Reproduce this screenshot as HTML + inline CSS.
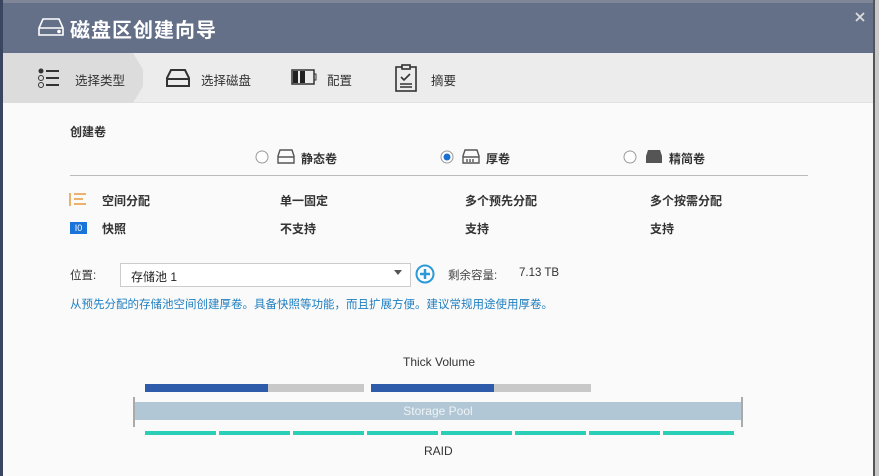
<!DOCTYPE html>
<html><head><meta charset="utf-8"><style>
*{margin:0;padding:0;box-sizing:border-box}
body{width:879px;height:476px;overflow:hidden;background:#fafafa;font-family:"Liberation Sans","Noto Sans CJK SC",sans-serif;position:relative;color:#222}
.hdr{position:absolute;left:0;top:0;width:879px;height:53px;background:#646f88;border-top:3px solid #7e8698}
.hdr .t{position:absolute;left:70px;top:11px;color:#fff;font-size:20px;font-weight:bold;letter-spacing:1px}
.lb{position:absolute;left:0;top:0;width:3px;height:476px;background:#3a4660}
.rb{position:absolute;right:4px;top:0;width:2px;height:476px;background:#555}
.rs{position:absolute;right:0;top:0;width:4px;height:476px;background:#c9c9c9}
.nav{position:absolute;left:3px;top:53px;width:870px;height:50px;background:#ececec;border-bottom:1px solid #e2e2e2}
.act{position:absolute;left:0;top:0;width:140px;height:50px;background:#dcdcdc;clip-path:polygon(0 0,130px 0,145px 25px,130px 50px,0 50px)}
.nv{position:absolute;top:17px;font-size:12.5px;color:#333}
.a{position:absolute;font-size:12px;font-weight:bold;color:#333}
.n{position:absolute;font-size:11.5px;color:#333}
</style></head><body>
<div class="hdr">
<svg style="position:absolute;left:38px;top:14px" width="26" height="20" viewBox="0 0 26 20" fill="none" stroke="#fff" stroke-width="1.6"><path d="M5 2h16l4 9v7H1v-7z"/><path d="M1 11h24"/><circle cx="21" cy="14.5" r="1" fill="#fff"/></svg>
<div class="t">磁盘区创建向导</div>
<svg style="position:absolute;left:855px;top:9px" width="10" height="10" stroke="#ddd" stroke-width="1.8"><path d="M1 1l8 8M9 1L1 9"/></svg>
</div>
<div class="nav">
<div class="act"></div>
<svg style="position:absolute;left:34px;top:14px" width="24" height="22"><circle cx="4" cy="4" r="2.5" fill="#333"/><circle cx="4" cy="11" r="2.5" fill="none" stroke="#333"/><circle cx="4" cy="18" r="2.5" fill="none" stroke="#333"/><path d="M9 4h13M9 11h13M9 18h13" stroke="#333" stroke-width="2"/></svg>
<div class="nv" style="left:72px">选择类型</div>
<svg style="position:absolute;left:163px;top:15px" width="24" height="20" fill="none" stroke="#333" stroke-width="2"><path d="M5 2h14l4 8v8H1v-8z"/><path d="M1 11h22"/></svg>
<div class="nv" style="left:198px">选择磁盘</div>
<svg style="position:absolute;left:288px;top:16px" width="26" height="16"><rect x="1" y="1" width="22" height="14" fill="none" stroke="#333" stroke-width="1.5"/><rect x="2" y="2" width="5" height="12" fill="#222"/><rect x="9" y="2" width="5" height="12" fill="#222"/><path d="M23 5h2v6h-2" stroke="#333" fill="none"/></svg>
<div class="nv" style="left:324px">配置</div>
<svg style="position:absolute;left:392px;top:11px" width="22" height="28" fill="none" stroke="#333" stroke-width="1.6"><rect x="1" y="3" width="20" height="24"/><rect x="7" y="1" width="8" height="4" fill="#ececec"/><path d="M6 13l3 3 6-6M5 20h12M5 23h12"/></svg>
<div class="nv" style="left:428px">摘要</div>
</div>
<div class="a" style="left:70px;top:123px">创建卷</div>
<svg style="position:absolute;left:255px;top:150px" width="14" height="14"><circle cx="7" cy="7" r="6" fill="#fff" stroke="#999"/></svg>
<svg style="position:absolute;left:277px;top:149px" width="18" height="15" fill="none" stroke="#555" stroke-width="1.4"><path d="M3 1h12l2 6v7H1V7z M1 8h16"/></svg>
<div class="a" style="left:301px;top:150px">静态卷</div>
<svg style="position:absolute;left:440px;top:150px" width="14" height="14"><circle cx="7" cy="7" r="6" fill="#fff" stroke="#999"/><circle cx="7" cy="7" r="3.5" fill="#1a6fd0"/></svg>
<svg style="position:absolute;left:462px;top:149px" width="18" height="15" fill="none" stroke="#555" stroke-width="1.4"><path d="M3 1h12l2 6v7H1V7z M1 8h16 M5 10v3M8 10v3M11 10v3"/></svg>
<div class="a" style="left:486px;top:150px">厚卷</div>
<svg style="position:absolute;left:623px;top:150px" width="14" height="14"><circle cx="7" cy="7" r="6" fill="#fff" stroke="#999"/></svg>
<svg style="position:absolute;left:645px;top:149px" width="18" height="15"><path d="M3 1h12l2 6v7H1V7z" fill="#555"/></svg>
<div class="a" style="left:669px;top:150px">精简卷</div>
<div style="position:absolute;left:70px;top:175px;width:738px;height:1px;background:#bbb"></div>
<svg style="position:absolute;left:69px;top:192px" width="18" height="15" stroke="#e89a3c" stroke-width="1.5"><path d="M1 1v13M5 2h12M5 7h9M5 12h12"/></svg>
<div class="a" style="left:102px;top:192px">空间分配</div>
<div class="a" style="left:280px;top:192px">单一固定</div>
<div class="a" style="left:465px;top:192px">多个预先分配</div>
<div class="a" style="left:650px;top:192px">多个按需分配</div>
<div style="position:absolute;left:70px;top:222px;width:17px;height:12px;background:#1a73d9;color:#fff;font-size:9px;line-height:12px;text-align:center">I0</div>
<div class="a" style="left:102px;top:220px">快照</div>
<div class="a" style="left:280px;top:220px">不支持</div>
<div class="a" style="left:465px;top:220px">支持</div>
<div class="a" style="left:650px;top:220px">支持</div>
<div class="n" style="left:70px;top:267px">位置:</div>
<div style="position:absolute;left:120px;top:263px;width:291px;height:24px;background:#fff;border:1px solid #ccc"><span style="position:absolute;left:10px;top:4px;font-size:12px">存储池 1</span><span style="position:absolute;right:8px;top:6px;border:4px solid transparent;border-top:5px solid #555"></span></div>
<svg style="position:absolute;left:415px;top:264px" width="20" height="20"><circle cx="10" cy="10" r="8.5" fill="#fff" stroke="#2a9ad8" stroke-width="2"/><path d="M10 5v10M5 10h10" stroke="#2a9ad8" stroke-width="2.5"/></svg>
<div class="n" style="left:448px;top:267px;color:#444">剩余容量:</div>
<div class="n" style="left:519px;top:267px">7.13 TB</div>
<div style="position:absolute;left:70px;top:296px;font-size:11.5px;color:#1f7fc0">从预先分配的存储池空间创建厚卷。具备快照等功能，而且扩展方便。建议常规用途使用厚卷。</div>
<div style="position:absolute;left:403px;top:355px;font-size:12px;color:#333">Thick Volume</div>
<div style="position:absolute;left:145px;top:384px;width:123px;height:8px;background:#2f5bab"></div>
<div style="position:absolute;left:268px;top:384px;width:96px;height:8px;background:#c8c8c8"></div>
<div style="position:absolute;left:371px;top:384px;width:123px;height:8px;background:#2f5bab"></div>
<div style="position:absolute;left:494px;top:384px;width:97px;height:8px;background:#c8c8c8"></div>
<div style="position:absolute;left:133px;top:397px;width:2px;height:30px;background:#aaa"></div>
<div style="position:absolute;left:741px;top:397px;width:2px;height:30px;background:#aaa"></div>
<div style="position:absolute;left:135px;top:402px;width:606px;height:18px;background:#b2c7d5;color:#eef3f6;font-size:12px;text-align:center;line-height:18px">Storage Pool</div>
<div style="position:absolute;left:145px;top:431px;width:590px;height:4px;background:repeating-linear-gradient(90deg,#2bcfb8 0 71px,transparent 71px 74px)"></div>
<div style="position:absolute;left:424px;top:444px;font-size:12px;color:#333">RAID</div>
<div class="lb"></div><div class="rb"></div><div class="rs"></div>
</body></html>
